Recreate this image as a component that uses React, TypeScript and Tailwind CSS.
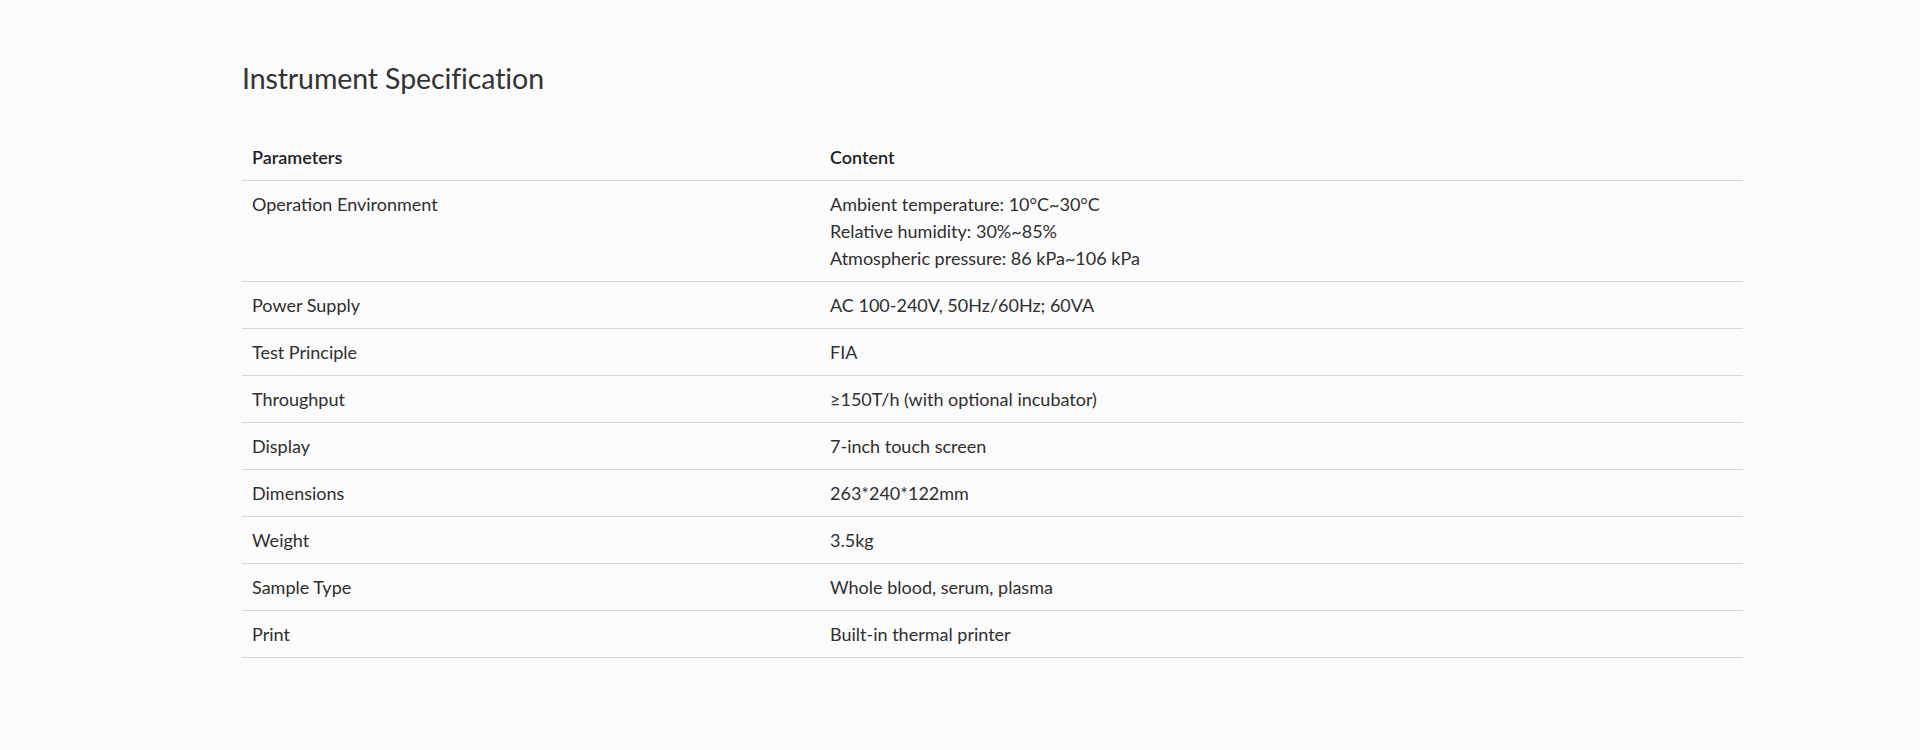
import React from "react";

const rows: { p: string; c: string[] }[] = [
  {
    p: "Operation Environment",
    c: [
      "Ambient temperature: 10°C~30°C",
      "Relative humidity: 30%~85%",
      "Atmospheric pressure: 86 kPa~106 kPa",
    ],
  },
  { p: "Power Supply", c: ["AC 100-240V, 50Hz/60Hz; 60VA"] },
  { p: "Test Principle", c: ["FIA"] },
  { p: "Throughput", c: ["≥150T/h (with optional incubator)"] },
  { p: "Display", c: ["7-inch touch screen"] },
  { p: "Dimensions", c: ["263*240*122mm"] },
  { p: "Weight", c: ["3.5kg"] },
  { p: "Sample Type", c: ["Whole blood, serum, plasma"] },
  { p: "Print", c: ["Built-in thermal printer"] },
];

export default function App() {
  return (
    <div
      className="w-[1920px] h-[750px] bg-[#fbfbfc] text-[#2f2f2f]"
      style={{ fontFamily: "Lato, 'Open Sans', sans-serif" }}
    >
      <div className="ml-[242px] w-[1501px] pt-[61px]">
        <h2 className="text-[28.5px] leading-[1.2] font-normal text-[#333] tracking-[-0.1px]">
          Instrument Specification
        </h2>
        <table className="mt-[39px] w-full border-collapse text-[18px] leading-[27px]">
          <thead>
            <tr className="border-b border-[#d4d6d9]">
              <th className="w-[580px] text-left font-semibold text-[#1f1f1f] px-[10px] pt-[10px] pb-[9px]">
                Parameters
              </th>
              <th className="text-left font-semibold text-[#1f1f1f] px-[8px] pt-[10px] pb-[9px]">Content</th>
            </tr>
          </thead>
          <tbody>
            {rows.map((r) => (
              <tr key={r.p} className="border-b border-[#d4d6d9] align-top">
                <td className="px-[10px] pt-[10px] pb-[9px]">{r.p}</td>
                <td className="px-[8px] pt-[10px] pb-[9px]">
                  {r.c.map((l) => (
                    <div key={l}>{l}</div>
                  ))}
                </td>
              </tr>
            ))}
          </tbody>
        </table>
      </div>
    </div>
  );
}
